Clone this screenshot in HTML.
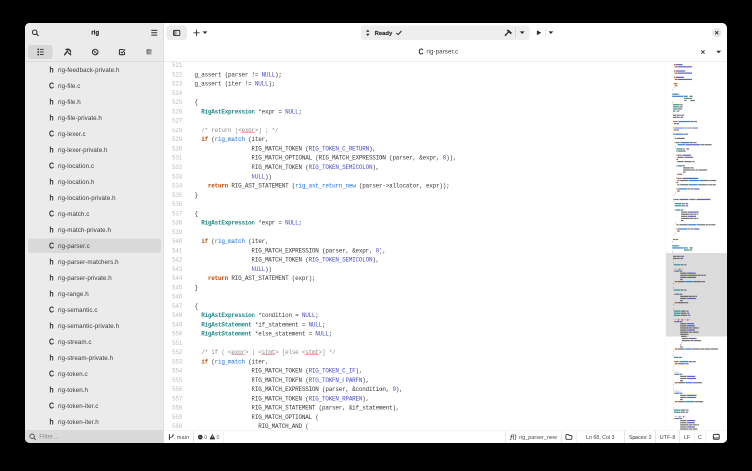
<!DOCTYPE html>
<html><head><meta charset="utf-8"><title>rig-parser.c</title>
<style>
html,body{margin:0;padding:0;background:#000;width:752px;height:471px;overflow:hidden}
body{font-family:"Liberation Sans",sans-serif;color:#2e2e2e;-webkit-font-smoothing:antialiased}
.win{position:absolute;left:25px;top:23px;width:702px;height:420px;overflow:hidden;border-radius:5px;background:#fff}
.scaler{position:absolute;left:-25px;top:-23px;width:1504px;height:942px;transform:scale(0.5);transform-origin:0 0;will-change:transform}

.abs{position:absolute;left:0;top:0;width:1504px;height:942px}
.abs *{position:absolute;box-sizing:border-box}
.abs span{position:static}
.sidebar{left:50px;top:46px;width:277.2px;height:840px;background:#ebebeb}
.sideborder{left:326.4px;top:46px;width:1.6px;height:840px;background:#dedede}
.sidesep{left:50px;top:122.4px;width:276.8px;height:1.8px;background:#dcdcdc}
.title{left:51.8px;width:277.2px;top:55.6px;text-align:center;font-weight:bold;font-size:12.4px;line-height:18px;color:#242424;-webkit-text-stroke:0.3px #242424}
.tabsel{left:56px;top:90px;width:49.4px;height:28px;border-radius:6px;background:#d7d7d7}
.frow{left:50px;width:277.2px;height:32px}
.frow.sel::before{content:"";position:absolute;left:6.2px;top:0.6px;width:265.6px;height:29.8px;border-radius:5px;background:#d9d9d9}
.fic{position:absolute!important;left:46.4px;top:6.6px;width:14px;text-align:center;font-weight:bold;font-size:16px;line-height:18px;color:#333;transform:scaleX(0.88)}
.fn{position:absolute!important;left:66px;top:6.9px;font-size:12.4px;letter-spacing:0.14px;line-height:18px;color:#3c3c3c;white-space:nowrap}
.filter{left:50px;top:860px;width:277.2px;height:26px;background:#dadada}
.filtertxt{left:78.4px;top:864.2px;font-size:12.4px;line-height:18px;color:#8c8c8c}
/* header */
.btnbg{background:#ebebeb;border-radius:6px}
.edsep{left:328px;top:122px;width:1126px;height:1.8px;background:#eeeeee}
.txt{white-space:nowrap;font-size:12.4px;line-height:18px;color:#333}
/* code */
.code{left:328px;top:124px;width:1004px;height:737.2px;overflow:hidden;font-family:"Liberation Mono",monospace;font-size:11.9px;letter-spacing:-0.426px;color:#3a3a3a}
.ln{position:static!important;height:18.531px;line-height:18.531px;white-space:pre;padding-left:47.6px;margin:0}
.no{position:absolute!important;left:0;width:36.2px;text-align:right;color:#bdbdbd}
.codein{left:0;top:-1.7px;width:1200px}
.k{color:#c64600;font-weight:bold}
.t{color:#218787;font-weight:bold}
.f{color:#1c71d8}
.c{color:#4a4fc4}
.m{color:#8f8f8f}
.e{color:#8f8f8f;text-decoration:underline solid rgba(224,27,36,0.85) 1.4px;text-underline-offset:1.4px}
/* minimap */
.mm{left:1332px;top:124px;width:122px;height:737.2px;background:#fff}
.mmline{left:1330.6px;top:124px;width:1.6px;height:737.2px;background:#f0f0f0}
.mmview{left:0;top:382.2px;width:122px;height:166.8px;background:#dcdcdc}
.mmsvg{left:0;top:0}
/* status */
.status{left:328px;top:860.6px;width:1126px;height:25.4px;background:#fff;border-top:1.8px solid #e9e9e9}
.vs{top:862.4px;width:1.6px;height:23.6px;background:#e6e6e6}
.st{top:865px;font-size:10.7px;color:#444}
svg{overflow:visible}

</style></head><body>
<div class="win"><div class="scaler"><div class="abs">

<!-- ===== Sidebar ===== -->
<div class="sidebar"></div>
<div class="title">rig</div>
<div class="tabsel"></div>
<div class="sidesep"></div>
<!--ICONS_SIDE-->
<div class="frow" style="top:124px"><span class="fic">h</span><span class="fn">rig-feedback-private.h</span></div>
<div class="frow" style="top:156px"><span class="fic">C</span><span class="fn">rig-file.c</span></div>
<div class="frow" style="top:188px"><span class="fic">h</span><span class="fn">rig-file.h</span></div>
<div class="frow" style="top:220px"><span class="fic">h</span><span class="fn">rig-file-private.h</span></div>
<div class="frow" style="top:252px"><span class="fic">C</span><span class="fn">rig-lexer.c</span></div>
<div class="frow" style="top:284px"><span class="fic">h</span><span class="fn">rig-lexer-private.h</span></div>
<div class="frow" style="top:316px"><span class="fic">C</span><span class="fn">rig-location.c</span></div>
<div class="frow" style="top:348px"><span class="fic">h</span><span class="fn">rig-location.h</span></div>
<div class="frow" style="top:380px"><span class="fic">h</span><span class="fn">rig-location-private.h</span></div>
<div class="frow" style="top:412px"><span class="fic">C</span><span class="fn">rig-match.c</span></div>
<div class="frow" style="top:444px"><span class="fic">h</span><span class="fn">rig-match-private.h</span></div>
<div class="frow sel" style="top:476px"><span class="fic">C</span><span class="fn">rig-parser.c</span></div>
<div class="frow" style="top:508px"><span class="fic">h</span><span class="fn">rig-parser-matchers.h</span></div>
<div class="frow" style="top:540px"><span class="fic">h</span><span class="fn">rig-parser-private.h</span></div>
<div class="frow" style="top:572px"><span class="fic">h</span><span class="fn">rig-range.h</span></div>
<div class="frow" style="top:604px"><span class="fic">C</span><span class="fn">rig-semantic.c</span></div>
<div class="frow" style="top:636px"><span class="fic">h</span><span class="fn">rig-semantic-private.h</span></div>
<div class="frow" style="top:668px"><span class="fic">C</span><span class="fn">rig-stream.c</span></div>
<div class="frow" style="top:700px"><span class="fic">h</span><span class="fn">rig-stream-private.h</span></div>
<div class="frow" style="top:732px"><span class="fic">C</span><span class="fn">rig-token.c</span></div>
<div class="frow" style="top:764px"><span class="fic">h</span><span class="fn">rig-token.h</span></div>
<div class="frow" style="top:796px"><span class="fic">C</span><span class="fn">rig-token-iter.c</span></div>
<div class="frow" style="top:828px"><span class="fic">h</span><span class="fn">rig-token-iter.h</span></div>
<div class="filter"></div>
<div class="filtertxt">Filter…</div>
<div class="sideborder"></div>

<!-- ===== Header ===== -->
<div class="btnbg" style="left:333.2px;top:51.2px;width:40.4px;height:28.4px"></div>
<div class="btnbg" style="left:721.8px;top:51.2px;width:336.8px;height:28.4px;background:#eeeeee"></div>
<div class="txt" style="left:749.2px;top:57.1px;font-weight:bold;font-size:11.8px;-webkit-text-stroke:0.36px #333">Ready</div>
<div style="left:1423.9px;top:55.9px;width:19.4px;height:19.4px;border-radius:50%;background:#e7e7e7"></div>
<div class="txt" style="left:835.8px;top:94.8px;font-weight:bold;font-size:16px;width:12px;text-align:center;transform:scaleX(0.88)">C</div>
<div class="txt" style="left:852.8px;top:94.4px;font-size:12.4px;letter-spacing:0.14px;color:#3c3c3c">rig-parser.c</div>
<!--ICONS_HEAD-->
<div class="edsep"></div>

<!-- ===== Code ===== -->
<div class="code"><div class="codein">
<div class="ln"><span class="no">521</span></div>
<div class="ln"><span class="no">522</span>  g_assert (parser != <span class="c">NULL</span>);</div>
<div class="ln"><span class="no">523</span>  g_assert (iter != <span class="c">NULL</span>);</div>
<div class="ln"><span class="no">524</span></div>
<div class="ln"><span class="no">525</span>  {</div>
<div class="ln"><span class="no">526</span>    <span class="t">RigAstExpression</span> *expr = <span class="c">NULL</span>;</div>
<div class="ln"><span class="no">527</span></div>
<div class="ln"><span class="no">528</span>    <span class="m">/* return [&lt;</span><span class="e">expr</span><span class="m">&gt;] ; */</span></div>
<div class="ln"><span class="no">529</span>    <span class="k">if</span> (<span class="f">rig_match</span> (iter,</div>
<div class="ln"><span class="no">530</span>                   RIG_MATCH_TOKEN (<span class="c">RIG_TOKEN_C_RETURN</span>),</div>
<div class="ln"><span class="no">531</span>                   RIG_MATCH_OPTIONAL (RIG_MATCH_EXPRESSION (parser, &amp;expr, <span class="c">0</span>)),</div>
<div class="ln"><span class="no">532</span>                   RIG_MATCH_TOKEN (<span class="c">RIG_TOKEN_SEMICOLON</span>),</div>
<div class="ln"><span class="no">533</span>                   <span class="c">NULL</span>))</div>
<div class="ln"><span class="no">534</span>      <span class="k">return</span> RIG_AST_STATEMENT (<span class="f">rig_ast_return_new</span> (parser-&gt;allocator, expr));</div>
<div class="ln"><span class="no">535</span>  }</div>
<div class="ln"><span class="no">536</span></div>
<div class="ln"><span class="no">537</span>  {</div>
<div class="ln"><span class="no">538</span>    <span class="t">RigAstExpression</span> *expr = <span class="c">NULL</span>;</div>
<div class="ln"><span class="no">539</span></div>
<div class="ln"><span class="no">540</span>    <span class="k">if</span> (<span class="f">rig_match</span> (iter,</div>
<div class="ln"><span class="no">541</span>                   RIG_MATCH_EXPRESSION (parser, &amp;expr, <span class="c">0</span>),</div>
<div class="ln"><span class="no">542</span>                   RIG_MATCH_TOKEN (<span class="c">RIG_TOKEN_SEMICOLON</span>),</div>
<div class="ln"><span class="no">543</span>                   <span class="c">NULL</span>))</div>
<div class="ln"><span class="no">544</span>      <span class="k">return</span> RIG_AST_STATEMENT (expr);</div>
<div class="ln"><span class="no">545</span>  }</div>
<div class="ln"><span class="no">546</span></div>
<div class="ln"><span class="no">547</span>  {</div>
<div class="ln"><span class="no">548</span>    <span class="t">RigAstExpression</span> *condition = <span class="c">NULL</span>;</div>
<div class="ln"><span class="no">549</span>    <span class="t">RigAstStatement</span> *if_statement = <span class="c">NULL</span>;</div>
<div class="ln"><span class="no">550</span>    <span class="t">RigAstStatement</span> *else_statement = <span class="c">NULL</span>;</div>
<div class="ln"><span class="no">551</span></div>
<div class="ln"><span class="no">552</span>    <span class="m">/* if ( &lt;</span><span class="e">expr</span><span class="m">&gt; ) &lt;</span><span class="e">stmt</span><span class="m">&gt; [else &lt;</span><span class="e">stmt</span><span class="m">&gt;] */</span></div>
<div class="ln"><span class="no">553</span>    <span class="k">if</span> (<span class="f">rig_match</span> (iter,</div>
<div class="ln"><span class="no">554</span>                   RIG_MATCH_TOKEN (<span class="c">RIG_TOKEN_C_IF</span>),</div>
<div class="ln"><span class="no">555</span>                   RIG_MATCH_TOKEN (<span class="c">RIG_TOKEN_LPAREN</span>),</div>
<div class="ln"><span class="no">556</span>                   RIG_MATCH_EXPRESSION (parser, &amp;condition, <span class="c">0</span>),</div>
<div class="ln"><span class="no">557</span>                   RIG_MATCH_TOKEN (<span class="c">RIG_TOKEN_RPAREN</span>),</div>
<div class="ln"><span class="no">558</span>                   RIG_MATCH_STATEMENT (parser, &amp;if_statement),</div>
<div class="ln"><span class="no">559</span>                   RIG_MATCH_OPTIONAL (</div>
<div class="ln"><span class="no">560</span>                     RIG_MATCH_AND (</div>
<div class="ln"><span class="no">561</span>                       RIG_MATCH_TOKEN (<span class="c">RIG_TOKEN_C_ELSE</span>),</div>
</div></div>

<!-- ===== Minimap ===== -->
<div class="mmline"></div>
<div class="mm"><div class="mmview"></div><svg class="mmsvg" width="122" height="736" viewBox="0 0 61 368"><rect x="7.88" y="2.10" width="1.68" height="1.2" fill="#c64600" opacity="0.9"/><rect x="9.98" y="2.10" width="6.30" height="1.2" fill="#4a4fc4" opacity="0.9"/><rect x="16.28" y="2.10" width="0.42" height="1.2" fill="#3a3a3a" opacity="0.72"/><rect x="8.72" y="4.21" width="2.52" height="1.2" fill="#c64600" opacity="0.9"/><rect x="11.66" y="4.21" width="13.86" height="1.2" fill="#4a4fc4" opacity="0.9"/><rect x="25.52" y="4.21" width="0.42" height="1.2" fill="#3a3a3a" opacity="0.72"/><rect x="7.88" y="8.42" width="1.68" height="1.2" fill="#c64600" opacity="0.9"/><rect x="9.98" y="8.42" width="8.82" height="1.2" fill="#4a4fc4" opacity="0.9"/><rect x="18.80" y="8.42" width="0.42" height="1.2" fill="#3a3a3a" opacity="0.72"/><rect x="8.72" y="10.52" width="2.52" height="1.2" fill="#c64600" opacity="0.9"/><rect x="11.66" y="10.52" width="13.86" height="1.2" fill="#4a4fc4" opacity="0.9"/><rect x="25.52" y="10.52" width="0.42" height="1.2" fill="#3a3a3a" opacity="0.72"/><rect x="7.88" y="14.74" width="1.68" height="1.2" fill="#c64600" opacity="0.9"/><rect x="9.98" y="14.74" width="7.56" height="1.2" fill="#4a4fc4" opacity="0.9"/><rect x="17.54" y="14.74" width="0.42" height="1.2" fill="#3a3a3a" opacity="0.72"/><rect x="8.72" y="16.84" width="2.52" height="1.2" fill="#c64600" opacity="0.9"/><rect x="11.66" y="16.84" width="13.86" height="1.2" fill="#4a4fc4" opacity="0.9"/><rect x="25.52" y="16.84" width="0.42" height="1.2" fill="#3a3a3a" opacity="0.72"/><rect x="7.88" y="21.05" width="2.94" height="1.2" fill="#c64600" opacity="0.9"/><rect x="10.82" y="21.05" width="0.42" height="1.2" fill="#3a3a3a" opacity="0.72"/><rect x="8.72" y="23.16" width="2.10" height="1.2" fill="#c64600" opacity="0.9"/><rect x="10.82" y="23.16" width="0.42" height="1.2" fill="#3a3a3a" opacity="0.72"/><rect x="7.88" y="25.27" width="0.42" height="1.2" fill="#3a3a3a" opacity="0.72"/><rect x="6.20" y="27.37" width="0.42" height="1.2" fill="#3a3a3a" opacity="0.72"/><rect x="6.20" y="31.58" width="6.30" height="1.2" fill="#218787" opacity="0.9"/><rect x="12.92" y="31.58" width="0.42" height="1.2" fill="#3a3a3a" opacity="0.72"/><rect x="6.20" y="33.69" width="10.92" height="1.2" fill="#1c71d8" opacity="0.9"/><rect x="17.54" y="33.69" width="0.42" height="1.2" fill="#3a3a3a" opacity="0.72"/><rect x="17.96" y="33.69" width="3.78" height="1.2" fill="#218787" opacity="0.9"/><rect x="23.42" y="33.69" width="0.42" height="1.2" fill="#3a3a3a" opacity="0.72"/><rect x="23.84" y="33.69" width="2.52" height="1.2" fill="#3a3a3a" opacity="0.72"/><rect x="26.36" y="33.69" width="0.42" height="1.2" fill="#3a3a3a" opacity="0.72"/><rect x="17.96" y="35.80" width="5.04" height="1.2" fill="#218787" opacity="0.9"/><rect x="23.42" y="35.80" width="0.42" height="1.2" fill="#3a3a3a" opacity="0.72"/><rect x="23.84" y="35.80" width="1.68" height="1.2" fill="#3a3a3a" opacity="0.72"/><rect x="25.52" y="35.80" width="0.42" height="1.2" fill="#3a3a3a" opacity="0.72"/><rect x="18.38" y="37.90" width="2.10" height="1.2" fill="#3a3a3a" opacity="0.72"/><rect x="24.26" y="37.90" width="4.20" height="1.2" fill="#3a3a3a" opacity="0.72"/><rect x="28.46" y="37.90" width="0.42" height="1.2" fill="#3a3a3a" opacity="0.72"/><rect x="6.20" y="40.01" width="0.42" height="1.2" fill="#3a3a3a" opacity="0.72"/><rect x="7.04" y="42.11" width="6.72" height="1.2" fill="#218787" opacity="0.9"/><rect x="14.18" y="42.11" width="0.42" height="1.2" fill="#3a3a3a" opacity="0.72"/><rect x="14.60" y="42.11" width="1.68" height="1.2" fill="#3a3a3a" opacity="0.72"/><rect x="16.28" y="42.11" width="0.42" height="1.2" fill="#3a3a3a" opacity="0.72"/><rect x="7.04" y="44.22" width="6.30" height="1.2" fill="#218787" opacity="0.9"/><rect x="13.76" y="44.22" width="0.42" height="1.2" fill="#3a3a3a" opacity="0.72"/><rect x="14.18" y="44.22" width="2.10" height="1.2" fill="#3a3a3a" opacity="0.72"/><rect x="16.28" y="44.22" width="0.42" height="1.2" fill="#3a3a3a" opacity="0.72"/><rect x="7.04" y="46.33" width="4.20" height="1.2" fill="#218787" opacity="0.9"/><rect x="11.66" y="46.33" width="0.42" height="1.2" fill="#3a3a3a" opacity="0.72"/><rect x="12.08" y="46.33" width="3.36" height="1.2" fill="#3a3a3a" opacity="0.72"/><rect x="15.44" y="46.33" width="0.42" height="1.2" fill="#3a3a3a" opacity="0.72"/><rect x="7.04" y="48.43" width="2.52" height="1.2" fill="#218787" opacity="0.9"/><rect x="10.82" y="48.43" width="0.42" height="1.2" fill="#3a3a3a" opacity="0.72"/><rect x="11.24" y="48.43" width="1.68" height="1.2" fill="#3a3a3a" opacity="0.72"/><rect x="12.92" y="48.43" width="0.42" height="1.2" fill="#3a3a3a" opacity="0.72"/><rect x="7.04" y="52.64" width="3.36" height="1.2" fill="#3a3a3a" opacity="0.72"/><rect x="10.82" y="52.64" width="0.42" height="1.2" fill="#3a3a3a" opacity="0.72"/><rect x="11.24" y="52.64" width="2.52" height="1.2" fill="#3a3a3a" opacity="0.72"/><rect x="14.18" y="52.64" width="0.84" height="1.2" fill="#3a3a3a" opacity="0.72"/><rect x="15.44" y="52.64" width="1.68" height="1.2" fill="#4a4fc4" opacity="0.9"/><rect x="17.12" y="52.64" width="0.84" height="1.2" fill="#3a3a3a" opacity="0.72"/><rect x="7.04" y="54.75" width="3.36" height="1.2" fill="#3a3a3a" opacity="0.72"/><rect x="10.82" y="54.75" width="0.42" height="1.2" fill="#3a3a3a" opacity="0.72"/><rect x="11.24" y="54.75" width="1.68" height="1.2" fill="#3a3a3a" opacity="0.72"/><rect x="13.34" y="54.75" width="0.84" height="1.2" fill="#3a3a3a" opacity="0.72"/><rect x="14.60" y="54.75" width="1.68" height="1.2" fill="#4a4fc4" opacity="0.9"/><rect x="16.28" y="54.75" width="0.84" height="1.2" fill="#3a3a3a" opacity="0.72"/><rect x="7.04" y="58.96" width="0.84" height="1.2" fill="#c64600" opacity="0.9"/><rect x="8.30" y="58.96" width="1.26" height="1.2" fill="#3a3a3a" opacity="0.72"/><rect x="9.56" y="58.96" width="1.68" height="1.2" fill="#3a3a3a" opacity="0.72"/><rect x="11.66" y="58.96" width="0.42" height="1.2" fill="#3a3a3a" opacity="0.72"/><rect x="12.50" y="58.96" width="11.34" height="1.2" fill="#1c71d8" opacity="0.9"/><rect x="24.26" y="58.96" width="0.42" height="1.2" fill="#3a3a3a" opacity="0.72"/><rect x="24.68" y="58.96" width="2.52" height="1.2" fill="#3a3a3a" opacity="0.72"/><rect x="27.20" y="58.96" width="0.42" height="1.2" fill="#3a3a3a" opacity="0.72"/><rect x="28.04" y="58.96" width="1.68" height="1.2" fill="#3a3a3a" opacity="0.72"/><rect x="29.72" y="58.96" width="1.26" height="1.2" fill="#3a3a3a" opacity="0.72"/><rect x="7.88" y="61.07" width="2.52" height="1.2" fill="#c64600" opacity="0.9"/><rect x="10.82" y="61.07" width="1.68" height="1.2" fill="#4a4fc4" opacity="0.9"/><rect x="12.50" y="61.07" width="0.42" height="1.2" fill="#3a3a3a" opacity="0.72"/><rect x="7.04" y="65.28" width="0.84" height="1.2" fill="#c64600" opacity="0.9"/><rect x="8.30" y="65.28" width="0.84" height="1.2" fill="#3a3a3a" opacity="0.72"/><rect x="9.14" y="65.28" width="8.82" height="1.2" fill="#1c71d8" opacity="0.9"/><rect x="18.38" y="65.28" width="0.42" height="1.2" fill="#3a3a3a" opacity="0.72"/><rect x="18.80" y="65.28" width="1.68" height="1.2" fill="#3a3a3a" opacity="0.72"/><rect x="20.48" y="65.28" width="0.42" height="1.2" fill="#3a3a3a" opacity="0.72"/><rect x="21.32" y="65.28" width="0.42" height="1.2" fill="#3a3a3a" opacity="0.72"/><rect x="21.74" y="65.28" width="2.10" height="1.2" fill="#3a3a3a" opacity="0.72"/><rect x="24.26" y="65.28" width="1.68" height="1.2" fill="#4a4fc4" opacity="0.9"/><rect x="25.94" y="65.28" width="0.42" height="1.2" fill="#3a3a3a" opacity="0.72"/><rect x="26.78" y="65.28" width="4.20" height="1.2" fill="#4a4fc4" opacity="0.9"/><rect x="30.98" y="65.28" width="0.84" height="1.2" fill="#3a3a3a" opacity="0.72"/><rect x="7.88" y="67.39" width="2.52" height="1.2" fill="#c64600" opacity="0.9"/><rect x="10.82" y="67.39" width="1.68" height="1.2" fill="#3a3a3a" opacity="0.72"/><rect x="12.50" y="67.39" width="0.42" height="1.2" fill="#3a3a3a" opacity="0.72"/><rect x="7.04" y="71.60" width="0.84" height="1.2" fill="#c64600" opacity="0.9"/><rect x="8.30" y="71.60" width="0.42" height="1.2" fill="#3a3a3a" opacity="0.72"/><rect x="8.72" y="71.60" width="8.40" height="1.2" fill="#1c71d8" opacity="0.9"/><rect x="17.54" y="71.60" width="0.42" height="1.2" fill="#3a3a3a" opacity="0.72"/><rect x="17.96" y="71.60" width="1.26" height="1.2" fill="#3a3a3a" opacity="0.72"/><rect x="19.22" y="71.60" width="0.42" height="1.2" fill="#3a3a3a" opacity="0.72"/><rect x="19.64" y="71.60" width="1.68" height="1.2" fill="#3a3a3a" opacity="0.72"/><rect x="21.32" y="71.60" width="0.84" height="1.2" fill="#3a3a3a" opacity="0.72"/><rect x="7.88" y="73.70" width="0.42" height="1.2" fill="#3a3a3a" opacity="0.72"/><rect x="8.72" y="75.81" width="1.26" height="1.2" fill="#218787" opacity="0.9"/><rect x="10.40" y="75.81" width="7.98" height="1.2" fill="#3a3a3a" opacity="0.72"/><rect x="18.38" y="75.81" width="0.42" height="1.2" fill="#3a3a3a" opacity="0.72"/><rect x="8.72" y="80.02" width="0.84" height="1.2" fill="#c64600" opacity="0.9"/><rect x="9.98" y="80.02" width="1.26" height="1.2" fill="#3a3a3a" opacity="0.72"/><rect x="11.24" y="80.02" width="2.10" height="1.2" fill="#3a3a3a" opacity="0.72"/><rect x="13.76" y="80.02" width="0.42" height="1.2" fill="#3a3a3a" opacity="0.72"/><rect x="14.60" y="80.02" width="8.82" height="1.2" fill="#1c71d8" opacity="0.9"/><rect x="23.84" y="80.02" width="0.42" height="1.2" fill="#3a3a3a" opacity="0.72"/><rect x="24.26" y="80.02" width="2.52" height="1.2" fill="#3a3a3a" opacity="0.72"/><rect x="26.78" y="80.02" width="0.42" height="1.2" fill="#3a3a3a" opacity="0.72"/><rect x="27.62" y="80.02" width="1.68" height="1.2" fill="#3a3a3a" opacity="0.72"/><rect x="29.30" y="80.02" width="1.26" height="1.2" fill="#3a3a3a" opacity="0.72"/><rect x="11.66" y="82.13" width="7.56" height="1.2" fill="#1c71d8" opacity="0.9"/><rect x="19.64" y="82.13" width="0.42" height="1.2" fill="#3a3a3a" opacity="0.72"/><rect x="20.06" y="82.13" width="13.86" height="1.2" fill="#4a4fc4" opacity="0.9"/><rect x="33.92" y="82.13" width="0.42" height="1.2" fill="#3a3a3a" opacity="0.72"/><rect x="34.76" y="82.13" width="3.36" height="1.2" fill="#3a3a3a" opacity="0.72"/><rect x="38.12" y="82.13" width="0.42" height="1.2" fill="#3a3a3a" opacity="0.72"/><rect x="38.96" y="82.13" width="6.30" height="1.2" fill="#3a3a3a" opacity="0.72"/><rect x="45.26" y="82.13" width="0.42" height="1.2" fill="#3a3a3a" opacity="0.72"/><rect x="9.56" y="84.23" width="0.42" height="1.2" fill="#3a3a3a" opacity="0.72"/><rect x="10.40" y="86.34" width="6.30" height="1.2" fill="#218787" opacity="0.9"/><rect x="17.12" y="86.34" width="0.42" height="1.2" fill="#3a3a3a" opacity="0.72"/><rect x="17.54" y="86.34" width="1.26" height="1.2" fill="#3a3a3a" opacity="0.72"/><rect x="20.06" y="86.34" width="0.42" height="1.2" fill="#3a3a3a" opacity="0.72"/><rect x="20.90" y="86.34" width="1.68" height="1.2" fill="#4a4fc4" opacity="0.9"/><rect x="22.58" y="86.34" width="0.42" height="1.2" fill="#3a3a3a" opacity="0.72"/><rect x="10.40" y="88.45" width="1.26" height="1.2" fill="#218787" opacity="0.9"/><rect x="12.08" y="88.45" width="7.14" height="1.2" fill="#3a3a3a" opacity="0.72"/><rect x="19.22" y="88.45" width="0.42" height="1.2" fill="#3a3a3a" opacity="0.72"/><rect x="10.40" y="92.66" width="0.84" height="1.2" fill="#c64600" opacity="0.9"/><rect x="11.66" y="92.66" width="0.42" height="1.2" fill="#3a3a3a" opacity="0.72"/><rect x="12.08" y="92.66" width="1.26" height="1.2" fill="#3a3a3a" opacity="0.72"/><rect x="13.34" y="92.66" width="0.42" height="1.2" fill="#3a3a3a" opacity="0.72"/><rect x="13.76" y="92.66" width="1.68" height="1.2" fill="#3a3a3a" opacity="0.72"/><rect x="15.86" y="92.66" width="0.84" height="1.2" fill="#3a3a3a" opacity="0.72"/><rect x="17.12" y="92.66" width="7.56" height="1.2" fill="#4a4fc4" opacity="0.9"/><rect x="24.68" y="92.66" width="0.42" height="1.2" fill="#3a3a3a" opacity="0.72"/><rect x="11.24" y="94.76" width="6.30" height="1.2" fill="#3a3a3a" opacity="0.72"/><rect x="17.96" y="94.76" width="0.42" height="1.2" fill="#3a3a3a" opacity="0.72"/><rect x="18.80" y="94.76" width="7.98" height="1.2" fill="#3a3a3a" opacity="0.72"/><rect x="26.78" y="94.76" width="0.42" height="1.2" fill="#3a3a3a" opacity="0.72"/><rect x="10.40" y="96.87" width="1.68" height="1.2" fill="#c64600" opacity="0.9"/><rect x="11.24" y="98.98" width="6.30" height="1.2" fill="#3a3a3a" opacity="0.72"/><rect x="17.96" y="98.98" width="0.42" height="1.2" fill="#3a3a3a" opacity="0.72"/><rect x="18.80" y="98.98" width="6.30" height="1.2" fill="#3a3a3a" opacity="0.72"/><rect x="25.52" y="98.98" width="0.42" height="1.2" fill="#3a3a3a" opacity="0.72"/><rect x="26.36" y="98.98" width="1.68" height="1.2" fill="#4a4fc4" opacity="0.9"/><rect x="28.04" y="98.98" width="0.42" height="1.2" fill="#3a3a3a" opacity="0.72"/><rect x="10.40" y="103.19" width="0.84" height="1.2" fill="#c64600" opacity="0.9"/><rect x="11.66" y="103.19" width="0.42" height="1.2" fill="#3a3a3a" opacity="0.72"/><rect x="12.08" y="103.19" width="3.78" height="1.2" fill="#1c71d8" opacity="0.9"/><rect x="16.28" y="103.19" width="0.42" height="1.2" fill="#3a3a3a" opacity="0.72"/><rect x="16.70" y="103.19" width="1.68" height="1.2" fill="#3a3a3a" opacity="0.72"/><rect x="18.38" y="103.19" width="0.42" height="1.2" fill="#3a3a3a" opacity="0.72"/><rect x="17.12" y="105.29" width="6.72" height="1.2" fill="#3a3a3a" opacity="0.72"/><rect x="24.26" y="105.29" width="0.42" height="1.2" fill="#3a3a3a" opacity="0.72"/><rect x="24.68" y="105.29" width="2.10" height="1.2" fill="#3a3a3a" opacity="0.72"/><rect x="26.78" y="105.29" width="0.84" height="1.2" fill="#3a3a3a" opacity="0.72"/><rect x="17.12" y="107.40" width="7.98" height="1.2" fill="#3a3a3a" opacity="0.72"/><rect x="25.52" y="107.40" width="0.42" height="1.2" fill="#3a3a3a" opacity="0.72"/><rect x="25.94" y="107.40" width="2.52" height="1.2" fill="#3a3a3a" opacity="0.72"/><rect x="28.46" y="107.40" width="0.42" height="1.2" fill="#3a3a3a" opacity="0.72"/><rect x="29.30" y="107.40" width="0.42" height="1.2" fill="#3a3a3a" opacity="0.72"/><rect x="29.72" y="107.40" width="2.10" height="1.2" fill="#3a3a3a" opacity="0.72"/><rect x="31.82" y="107.40" width="0.42" height="1.2" fill="#3a3a3a" opacity="0.72"/><rect x="32.66" y="107.40" width="7.56" height="1.2" fill="#3a3a3a" opacity="0.72"/><rect x="40.22" y="107.40" width="0.84" height="1.2" fill="#3a3a3a" opacity="0.72"/><rect x="17.12" y="109.51" width="1.68" height="1.2" fill="#4a4fc4" opacity="0.9"/><rect x="18.80" y="109.51" width="0.84" height="1.2" fill="#3a3a3a" opacity="0.72"/><rect x="11.24" y="111.61" width="2.52" height="1.2" fill="#c64600" opacity="0.9"/><rect x="14.18" y="111.61" width="1.68" height="1.2" fill="#4a4fc4" opacity="0.9"/><rect x="15.86" y="111.61" width="0.42" height="1.2" fill="#3a3a3a" opacity="0.72"/><rect x="10.40" y="115.82" width="0.84" height="1.2" fill="#c64600" opacity="0.9"/><rect x="11.66" y="115.82" width="0.42" height="1.2" fill="#3a3a3a" opacity="0.72"/><rect x="12.08" y="115.82" width="1.26" height="1.2" fill="#3a3a3a" opacity="0.72"/><rect x="13.34" y="115.82" width="0.42" height="1.2" fill="#3a3a3a" opacity="0.72"/><rect x="13.76" y="115.82" width="1.68" height="1.2" fill="#3a3a3a" opacity="0.72"/><rect x="15.86" y="115.82" width="0.84" height="1.2" fill="#3a3a3a" opacity="0.72"/><rect x="17.12" y="115.82" width="14.70" height="1.2" fill="#4a4fc4" opacity="0.9"/><rect x="31.82" y="115.82" width="0.42" height="1.2" fill="#3a3a3a" opacity="0.72"/><rect x="11.24" y="117.93" width="1.68" height="1.2" fill="#3a3a3a" opacity="0.72"/><rect x="13.34" y="117.93" width="0.42" height="1.2" fill="#3a3a3a" opacity="0.72"/><rect x="14.18" y="117.93" width="7.98" height="1.2" fill="#3a3a3a" opacity="0.72"/><rect x="22.58" y="117.93" width="0.42" height="1.2" fill="#3a3a3a" opacity="0.72"/><rect x="23.00" y="117.93" width="10.08" height="1.2" fill="#1c71d8" opacity="0.9"/><rect x="33.50" y="117.93" width="0.42" height="1.2" fill="#3a3a3a" opacity="0.72"/><rect x="33.92" y="117.93" width="2.52" height="1.2" fill="#3a3a3a" opacity="0.72"/><rect x="36.44" y="117.93" width="0.84" height="1.2" fill="#3a3a3a" opacity="0.72"/><rect x="37.28" y="117.93" width="4.20" height="1.2" fill="#3a3a3a" opacity="0.72"/><rect x="41.48" y="117.93" width="0.42" height="1.2" fill="#3a3a3a" opacity="0.72"/><rect x="42.32" y="117.93" width="1.68" height="1.2" fill="#3a3a3a" opacity="0.72"/><rect x="44.00" y="117.93" width="0.42" height="1.2" fill="#3a3a3a" opacity="0.72"/><rect x="44.84" y="117.93" width="4.20" height="1.2" fill="#3a3a3a" opacity="0.72"/><rect x="49.04" y="117.93" width="1.26" height="1.2" fill="#3a3a3a" opacity="0.72"/><rect x="10.40" y="120.04" width="1.68" height="1.2" fill="#c64600" opacity="0.9"/><rect x="11.24" y="122.14" width="1.68" height="1.2" fill="#3a3a3a" opacity="0.72"/><rect x="13.34" y="122.14" width="0.42" height="1.2" fill="#3a3a3a" opacity="0.72"/><rect x="14.18" y="122.14" width="7.98" height="1.2" fill="#3a3a3a" opacity="0.72"/><rect x="22.58" y="122.14" width="0.42" height="1.2" fill="#3a3a3a" opacity="0.72"/><rect x="23.00" y="122.14" width="8.40" height="1.2" fill="#1c71d8" opacity="0.9"/><rect x="31.82" y="122.14" width="0.42" height="1.2" fill="#3a3a3a" opacity="0.72"/><rect x="32.24" y="122.14" width="2.52" height="1.2" fill="#3a3a3a" opacity="0.72"/><rect x="34.76" y="122.14" width="0.84" height="1.2" fill="#3a3a3a" opacity="0.72"/><rect x="35.60" y="122.14" width="4.20" height="1.2" fill="#3a3a3a" opacity="0.72"/><rect x="39.80" y="122.14" width="0.42" height="1.2" fill="#3a3a3a" opacity="0.72"/><rect x="40.64" y="122.14" width="1.68" height="1.2" fill="#3a3a3a" opacity="0.72"/><rect x="42.32" y="122.14" width="0.42" height="1.2" fill="#3a3a3a" opacity="0.72"/><rect x="43.16" y="122.14" width="2.52" height="1.2" fill="#3a3a3a" opacity="0.72"/><rect x="45.68" y="122.14" width="0.42" height="1.2" fill="#3a3a3a" opacity="0.72"/><rect x="46.52" y="122.14" width="2.10" height="1.2" fill="#3a3a3a" opacity="0.72"/><rect x="48.62" y="122.14" width="1.26" height="1.2" fill="#3a3a3a" opacity="0.72"/><rect x="10.40" y="126.35" width="0.84" height="1.2" fill="#c64600" opacity="0.9"/><rect x="11.66" y="126.35" width="0.42" height="1.2" fill="#3a3a3a" opacity="0.72"/><rect x="12.08" y="126.35" width="9.24" height="1.2" fill="#1c71d8" opacity="0.9"/><rect x="21.74" y="126.35" width="0.42" height="1.2" fill="#3a3a3a" opacity="0.72"/><rect x="22.16" y="126.35" width="1.68" height="1.2" fill="#3a3a3a" opacity="0.72"/><rect x="23.84" y="126.35" width="0.42" height="1.2" fill="#3a3a3a" opacity="0.72"/><rect x="24.68" y="126.35" width="0.42" height="1.2" fill="#3a3a3a" opacity="0.72"/><rect x="25.10" y="126.35" width="2.10" height="1.2" fill="#3a3a3a" opacity="0.72"/><rect x="27.20" y="126.35" width="0.42" height="1.2" fill="#3a3a3a" opacity="0.72"/><rect x="28.04" y="126.35" width="4.62" height="1.2" fill="#4a4fc4" opacity="0.9"/><rect x="32.66" y="126.35" width="0.84" height="1.2" fill="#3a3a3a" opacity="0.72"/><rect x="11.24" y="128.46" width="2.10" height="1.2" fill="#c64600" opacity="0.9"/><rect x="13.34" y="128.46" width="0.42" height="1.2" fill="#3a3a3a" opacity="0.72"/><rect x="9.56" y="130.57" width="0.42" height="1.2" fill="#3a3a3a" opacity="0.72"/><rect x="7.88" y="132.67" width="0.42" height="1.2" fill="#3a3a3a" opacity="0.72"/><rect x="7.04" y="136.88" width="0.84" height="1.2" fill="#c64600" opacity="0.9"/><rect x="8.30" y="136.88" width="0.42" height="1.2" fill="#3a3a3a" opacity="0.72"/><rect x="8.72" y="136.88" width="1.26" height="1.2" fill="#3a3a3a" opacity="0.72"/><rect x="9.98" y="136.88" width="0.42" height="1.2" fill="#3a3a3a" opacity="0.72"/><rect x="10.40" y="136.88" width="1.68" height="1.2" fill="#3a3a3a" opacity="0.72"/><rect x="12.50" y="136.88" width="0.84" height="1.2" fill="#3a3a3a" opacity="0.72"/><rect x="13.76" y="136.88" width="8.40" height="1.2" fill="#4a4fc4" opacity="0.9"/><rect x="22.58" y="136.88" width="0.84" height="1.2" fill="#3a3a3a" opacity="0.72"/><rect x="23.84" y="136.88" width="2.52" height="1.2" fill="#3a3a3a" opacity="0.72"/><rect x="26.36" y="136.88" width="0.84" height="1.2" fill="#3a3a3a" opacity="0.72"/><rect x="27.20" y="136.88" width="2.10" height="1.2" fill="#3a3a3a" opacity="0.72"/><rect x="29.72" y="136.88" width="0.42" height="1.2" fill="#3a3a3a" opacity="0.72"/><rect x="30.56" y="136.88" width="13.44" height="1.2" fill="#4a4fc4" opacity="0.9"/><rect x="44.00" y="136.88" width="0.42" height="1.2" fill="#3a3a3a" opacity="0.72"/><rect x="7.88" y="138.99" width="0.42" height="1.2" fill="#3a3a3a" opacity="0.72"/><rect x="8.72" y="141.10" width="6.72" height="1.2" fill="#218787" opacity="0.9"/><rect x="15.86" y="141.10" width="0.42" height="1.2" fill="#3a3a3a" opacity="0.72"/><rect x="16.28" y="141.10" width="2.52" height="1.2" fill="#3a3a3a" opacity="0.72"/><rect x="19.22" y="141.10" width="0.42" height="1.2" fill="#3a3a3a" opacity="0.72"/><rect x="20.06" y="141.10" width="1.68" height="1.2" fill="#4a4fc4" opacity="0.9"/><rect x="21.74" y="141.10" width="0.42" height="1.2" fill="#3a3a3a" opacity="0.72"/><rect x="8.72" y="143.20" width="6.72" height="1.2" fill="#218787" opacity="0.9"/><rect x="15.86" y="143.20" width="0.42" height="1.2" fill="#3a3a3a" opacity="0.72"/><rect x="16.28" y="143.20" width="2.52" height="1.2" fill="#3a3a3a" opacity="0.72"/><rect x="19.22" y="143.20" width="0.42" height="1.2" fill="#3a3a3a" opacity="0.72"/><rect x="20.06" y="143.20" width="1.68" height="1.2" fill="#4a4fc4" opacity="0.9"/><rect x="21.74" y="143.20" width="0.42" height="1.2" fill="#3a3a3a" opacity="0.72"/><rect x="8.72" y="147.41" width="0.84" height="1.2" fill="#c64600" opacity="0.9"/><rect x="9.98" y="147.41" width="0.42" height="1.2" fill="#3a3a3a" opacity="0.72"/><rect x="10.40" y="147.41" width="3.78" height="1.2" fill="#1c71d8" opacity="0.9"/><rect x="14.60" y="147.41" width="0.42" height="1.2" fill="#3a3a3a" opacity="0.72"/><rect x="15.02" y="147.41" width="1.68" height="1.2" fill="#3a3a3a" opacity="0.72"/><rect x="16.70" y="147.41" width="0.42" height="1.2" fill="#3a3a3a" opacity="0.72"/><rect x="15.02" y="149.52" width="6.30" height="1.2" fill="#3a3a3a" opacity="0.72"/><rect x="21.74" y="149.52" width="0.42" height="1.2" fill="#3a3a3a" opacity="0.72"/><rect x="22.16" y="149.52" width="9.66" height="1.2" fill="#4a4fc4" opacity="0.9"/><rect x="31.82" y="149.52" width="0.84" height="1.2" fill="#3a3a3a" opacity="0.72"/><rect x="15.02" y="151.63" width="8.40" height="1.2" fill="#3a3a3a" opacity="0.72"/><rect x="23.84" y="151.63" width="0.42" height="1.2" fill="#3a3a3a" opacity="0.72"/><rect x="24.26" y="151.63" width="2.52" height="1.2" fill="#3a3a3a" opacity="0.72"/><rect x="26.78" y="151.63" width="0.42" height="1.2" fill="#3a3a3a" opacity="0.72"/><rect x="27.62" y="151.63" width="0.42" height="1.2" fill="#3a3a3a" opacity="0.72"/><rect x="28.04" y="151.63" width="2.10" height="1.2" fill="#3a3a3a" opacity="0.72"/><rect x="30.14" y="151.63" width="0.42" height="1.2" fill="#3a3a3a" opacity="0.72"/><rect x="30.98" y="151.63" width="0.42" height="1.2" fill="#4a4fc4" opacity="0.9"/><rect x="31.40" y="151.63" width="0.84" height="1.2" fill="#3a3a3a" opacity="0.72"/><rect x="15.02" y="153.73" width="6.30" height="1.2" fill="#3a3a3a" opacity="0.72"/><rect x="21.74" y="153.73" width="0.42" height="1.2" fill="#3a3a3a" opacity="0.72"/><rect x="22.16" y="153.73" width="7.14" height="1.2" fill="#4a4fc4" opacity="0.9"/><rect x="29.30" y="153.73" width="0.84" height="1.2" fill="#3a3a3a" opacity="0.72"/><rect x="15.02" y="155.84" width="8.40" height="1.2" fill="#3a3a3a" opacity="0.72"/><rect x="23.84" y="155.84" width="0.42" height="1.2" fill="#3a3a3a" opacity="0.72"/><rect x="24.26" y="155.84" width="2.52" height="1.2" fill="#3a3a3a" opacity="0.72"/><rect x="26.78" y="155.84" width="0.42" height="1.2" fill="#3a3a3a" opacity="0.72"/><rect x="27.62" y="155.84" width="0.42" height="1.2" fill="#3a3a3a" opacity="0.72"/><rect x="28.04" y="155.84" width="2.10" height="1.2" fill="#3a3a3a" opacity="0.72"/><rect x="30.14" y="155.84" width="0.42" height="1.2" fill="#3a3a3a" opacity="0.72"/><rect x="30.98" y="155.84" width="0.42" height="1.2" fill="#4a4fc4" opacity="0.9"/><rect x="31.40" y="155.84" width="0.84" height="1.2" fill="#3a3a3a" opacity="0.72"/><rect x="15.02" y="157.94" width="1.68" height="1.2" fill="#4a4fc4" opacity="0.9"/><rect x="16.70" y="157.94" width="0.84" height="1.2" fill="#3a3a3a" opacity="0.72"/><rect x="9.56" y="160.05" width="0.42" height="1.2" fill="#3a3a3a" opacity="0.72"/><rect x="10.40" y="162.16" width="1.68" height="1.2" fill="#3a3a3a" opacity="0.72"/><rect x="12.50" y="162.16" width="0.42" height="1.2" fill="#3a3a3a" opacity="0.72"/><rect x="13.34" y="162.16" width="8.40" height="1.2" fill="#3a3a3a" opacity="0.72"/><rect x="22.16" y="162.16" width="0.42" height="1.2" fill="#3a3a3a" opacity="0.72"/><rect x="22.58" y="162.16" width="7.98" height="1.2" fill="#1c71d8" opacity="0.9"/><rect x="30.98" y="162.16" width="0.42" height="1.2" fill="#3a3a3a" opacity="0.72"/><rect x="31.40" y="162.16" width="2.52" height="1.2" fill="#3a3a3a" opacity="0.72"/><rect x="33.92" y="162.16" width="0.84" height="1.2" fill="#3a3a3a" opacity="0.72"/><rect x="34.76" y="162.16" width="4.20" height="1.2" fill="#3a3a3a" opacity="0.72"/><rect x="38.96" y="162.16" width="0.42" height="1.2" fill="#3a3a3a" opacity="0.72"/><rect x="39.80" y="162.16" width="1.68" height="1.2" fill="#3a3a3a" opacity="0.72"/><rect x="41.48" y="162.16" width="0.42" height="1.2" fill="#3a3a3a" opacity="0.72"/><rect x="42.32" y="162.16" width="2.10" height="1.2" fill="#3a3a3a" opacity="0.72"/><rect x="44.42" y="162.16" width="0.42" height="1.2" fill="#3a3a3a" opacity="0.72"/><rect x="45.26" y="162.16" width="2.94" height="1.2" fill="#3a3a3a" opacity="0.72"/><rect x="48.20" y="162.16" width="1.26" height="1.2" fill="#3a3a3a" opacity="0.72"/><rect x="10.40" y="166.37" width="0.84" height="1.2" fill="#c64600" opacity="0.9"/><rect x="11.66" y="166.37" width="0.42" height="1.2" fill="#3a3a3a" opacity="0.72"/><rect x="12.08" y="166.37" width="9.24" height="1.2" fill="#1c71d8" opacity="0.9"/><rect x="21.74" y="166.37" width="0.42" height="1.2" fill="#3a3a3a" opacity="0.72"/><rect x="22.16" y="166.37" width="1.68" height="1.2" fill="#3a3a3a" opacity="0.72"/><rect x="23.84" y="166.37" width="0.42" height="1.2" fill="#3a3a3a" opacity="0.72"/><rect x="24.68" y="166.37" width="0.42" height="1.2" fill="#3a3a3a" opacity="0.72"/><rect x="25.10" y="166.37" width="2.10" height="1.2" fill="#3a3a3a" opacity="0.72"/><rect x="27.20" y="166.37" width="0.42" height="1.2" fill="#3a3a3a" opacity="0.72"/><rect x="28.04" y="166.37" width="4.62" height="1.2" fill="#4a4fc4" opacity="0.9"/><rect x="32.66" y="166.37" width="0.84" height="1.2" fill="#3a3a3a" opacity="0.72"/><rect x="11.24" y="168.47" width="2.10" height="1.2" fill="#c64600" opacity="0.9"/><rect x="13.34" y="168.47" width="0.42" height="1.2" fill="#3a3a3a" opacity="0.72"/><rect x="9.56" y="170.58" width="0.42" height="1.2" fill="#3a3a3a" opacity="0.72"/><rect x="7.88" y="172.69" width="0.42" height="1.2" fill="#3a3a3a" opacity="0.72"/><rect x="7.04" y="176.90" width="2.52" height="1.2" fill="#c64600" opacity="0.9"/><rect x="9.98" y="176.90" width="1.68" height="1.2" fill="#3a3a3a" opacity="0.72"/><rect x="11.66" y="176.90" width="0.42" height="1.2" fill="#3a3a3a" opacity="0.72"/><rect x="6.20" y="179.00" width="0.42" height="1.2" fill="#3a3a3a" opacity="0.72"/><rect x="6.20" y="183.22" width="6.30" height="1.2" fill="#218787" opacity="0.9"/><rect x="12.92" y="183.22" width="0.42" height="1.2" fill="#3a3a3a" opacity="0.72"/><rect x="6.20" y="185.32" width="10.92" height="1.2" fill="#1c71d8" opacity="0.9"/><rect x="17.54" y="185.32" width="0.42" height="1.2" fill="#3a3a3a" opacity="0.72"/><rect x="17.96" y="185.32" width="3.78" height="1.2" fill="#218787" opacity="0.9"/><rect x="23.42" y="185.32" width="0.42" height="1.2" fill="#3a3a3a" opacity="0.72"/><rect x="23.84" y="185.32" width="2.52" height="1.2" fill="#3a3a3a" opacity="0.72"/><rect x="26.36" y="185.32" width="0.42" height="1.2" fill="#3a3a3a" opacity="0.72"/><rect x="17.96" y="187.43" width="5.04" height="1.2" fill="#218787" opacity="0.9"/><rect x="23.42" y="187.43" width="0.42" height="1.2" fill="#3a3a3a" opacity="0.72"/><rect x="23.84" y="187.43" width="1.68" height="1.2" fill="#3a3a3a" opacity="0.72"/><rect x="25.52" y="187.43" width="0.42" height="1.2" fill="#3a3a3a" opacity="0.72"/><rect x="6.20" y="189.53" width="0.42" height="1.2" fill="#3a3a3a" opacity="0.72"/><rect x="7.04" y="193.75" width="3.36" height="1.2" fill="#3a3a3a" opacity="0.72"/><rect x="10.82" y="193.75" width="0.42" height="1.2" fill="#3a3a3a" opacity="0.72"/><rect x="11.24" y="193.75" width="2.52" height="1.2" fill="#3a3a3a" opacity="0.72"/><rect x="14.18" y="193.75" width="0.84" height="1.2" fill="#3a3a3a" opacity="0.72"/><rect x="15.44" y="193.75" width="1.68" height="1.2" fill="#4a4fc4" opacity="0.9"/><rect x="17.12" y="193.75" width="0.84" height="1.2" fill="#3a3a3a" opacity="0.72"/><rect x="7.04" y="195.85" width="3.36" height="1.2" fill="#3a3a3a" opacity="0.72"/><rect x="10.82" y="195.85" width="0.42" height="1.2" fill="#3a3a3a" opacity="0.72"/><rect x="11.24" y="195.85" width="1.68" height="1.2" fill="#3a3a3a" opacity="0.72"/><rect x="13.34" y="195.85" width="0.84" height="1.2" fill="#3a3a3a" opacity="0.72"/><rect x="14.60" y="195.85" width="1.68" height="1.2" fill="#4a4fc4" opacity="0.9"/><rect x="16.28" y="195.85" width="0.84" height="1.2" fill="#3a3a3a" opacity="0.72"/><rect x="7.04" y="200.06" width="0.42" height="1.2" fill="#3a3a3a" opacity="0.72"/><rect x="7.88" y="202.17" width="6.72" height="1.2" fill="#218787" opacity="0.9"/><rect x="15.02" y="202.17" width="0.42" height="1.2" fill="#3a3a3a" opacity="0.72"/><rect x="15.44" y="202.17" width="1.68" height="1.2" fill="#3a3a3a" opacity="0.72"/><rect x="17.54" y="202.17" width="0.42" height="1.2" fill="#3a3a3a" opacity="0.72"/><rect x="18.38" y="202.17" width="1.68" height="1.2" fill="#4a4fc4" opacity="0.9"/><rect x="20.06" y="202.17" width="0.42" height="1.2" fill="#3a3a3a" opacity="0.72"/><rect x="7.88" y="206.38" width="0.84" height="1.2" fill="#9a9a9a" opacity="0.45"/><rect x="9.14" y="206.38" width="2.52" height="1.2" fill="#9a9a9a" opacity="0.45"/><rect x="12.08" y="206.38" width="0.84" height="1.2" fill="#9a9a9a" opacity="0.45"/><rect x="12.92" y="206.38" width="1.68" height="1.2" fill="#9a9a9a" opacity="0.45"/><rect x="13.36" y="206.88" width="0.9" height="1.3" fill="#e01b24" opacity="0.9"/><rect x="14.60" y="206.38" width="0.84" height="1.2" fill="#9a9a9a" opacity="0.45"/><rect x="15.86" y="206.38" width="0.42" height="1.2" fill="#9a9a9a" opacity="0.45"/><rect x="16.70" y="206.38" width="0.84" height="1.2" fill="#9a9a9a" opacity="0.45"/><rect x="7.88" y="208.49" width="0.84" height="1.2" fill="#c64600" opacity="0.9"/><rect x="9.14" y="208.49" width="0.42" height="1.2" fill="#3a3a3a" opacity="0.72"/><rect x="9.56" y="208.49" width="3.78" height="1.2" fill="#1c71d8" opacity="0.9"/><rect x="13.76" y="208.49" width="0.42" height="1.2" fill="#3a3a3a" opacity="0.72"/><rect x="14.18" y="208.49" width="1.68" height="1.2" fill="#3a3a3a" opacity="0.72"/><rect x="15.86" y="208.49" width="0.42" height="1.2" fill="#3a3a3a" opacity="0.72"/><rect x="14.18" y="210.59" width="6.30" height="1.2" fill="#3a3a3a" opacity="0.72"/><rect x="20.90" y="210.59" width="0.42" height="1.2" fill="#3a3a3a" opacity="0.72"/><rect x="21.32" y="210.59" width="7.56" height="1.2" fill="#4a4fc4" opacity="0.9"/><rect x="28.88" y="210.59" width="0.84" height="1.2" fill="#3a3a3a" opacity="0.72"/><rect x="14.18" y="212.70" width="7.56" height="1.2" fill="#3a3a3a" opacity="0.72"/><rect x="22.16" y="212.70" width="0.42" height="1.2" fill="#3a3a3a" opacity="0.72"/><rect x="22.58" y="212.70" width="8.40" height="1.2" fill="#3a3a3a" opacity="0.72"/><rect x="31.40" y="212.70" width="0.42" height="1.2" fill="#3a3a3a" opacity="0.72"/><rect x="31.82" y="212.70" width="2.52" height="1.2" fill="#3a3a3a" opacity="0.72"/><rect x="34.34" y="212.70" width="0.42" height="1.2" fill="#3a3a3a" opacity="0.72"/><rect x="35.18" y="212.70" width="0.42" height="1.2" fill="#3a3a3a" opacity="0.72"/><rect x="35.60" y="212.70" width="1.68" height="1.2" fill="#3a3a3a" opacity="0.72"/><rect x="37.28" y="212.70" width="0.42" height="1.2" fill="#3a3a3a" opacity="0.72"/><rect x="38.12" y="212.70" width="0.42" height="1.2" fill="#4a4fc4" opacity="0.9"/><rect x="38.54" y="212.70" width="1.26" height="1.2" fill="#3a3a3a" opacity="0.72"/><rect x="14.18" y="214.81" width="6.30" height="1.2" fill="#3a3a3a" opacity="0.72"/><rect x="20.90" y="214.81" width="0.42" height="1.2" fill="#3a3a3a" opacity="0.72"/><rect x="21.32" y="214.81" width="7.98" height="1.2" fill="#4a4fc4" opacity="0.9"/><rect x="29.30" y="214.81" width="0.84" height="1.2" fill="#3a3a3a" opacity="0.72"/><rect x="14.18" y="216.91" width="1.68" height="1.2" fill="#4a4fc4" opacity="0.9"/><rect x="15.86" y="216.91" width="0.84" height="1.2" fill="#3a3a3a" opacity="0.72"/><rect x="8.72" y="219.02" width="2.52" height="1.2" fill="#c64600" opacity="0.9"/><rect x="11.66" y="219.02" width="7.14" height="1.2" fill="#3a3a3a" opacity="0.72"/><rect x="19.22" y="219.02" width="0.42" height="1.2" fill="#3a3a3a" opacity="0.72"/><rect x="19.64" y="219.02" width="7.56" height="1.2" fill="#1c71d8" opacity="0.9"/><rect x="27.62" y="219.02" width="0.42" height="1.2" fill="#3a3a3a" opacity="0.72"/><rect x="28.04" y="219.02" width="2.52" height="1.2" fill="#3a3a3a" opacity="0.72"/><rect x="30.56" y="219.02" width="0.84" height="1.2" fill="#3a3a3a" opacity="0.72"/><rect x="31.40" y="219.02" width="3.78" height="1.2" fill="#3a3a3a" opacity="0.72"/><rect x="35.18" y="219.02" width="0.42" height="1.2" fill="#3a3a3a" opacity="0.72"/><rect x="36.02" y="219.02" width="1.68" height="1.2" fill="#3a3a3a" opacity="0.72"/><rect x="37.70" y="219.02" width="1.26" height="1.2" fill="#3a3a3a" opacity="0.72"/><rect x="7.04" y="221.12" width="0.42" height="1.2" fill="#3a3a3a" opacity="0.72"/><rect x="7.04" y="225.34" width="0.42" height="1.2" fill="#3a3a3a" opacity="0.72"/><rect x="7.88" y="227.44" width="6.72" height="1.2" fill="#218787" opacity="0.9"/><rect x="15.02" y="227.44" width="0.42" height="1.2" fill="#3a3a3a" opacity="0.72"/><rect x="15.44" y="227.44" width="1.68" height="1.2" fill="#3a3a3a" opacity="0.72"/><rect x="17.54" y="227.44" width="0.42" height="1.2" fill="#3a3a3a" opacity="0.72"/><rect x="18.38" y="227.44" width="1.68" height="1.2" fill="#4a4fc4" opacity="0.9"/><rect x="20.06" y="227.44" width="0.42" height="1.2" fill="#3a3a3a" opacity="0.72"/><rect x="7.88" y="231.65" width="0.84" height="1.2" fill="#c64600" opacity="0.9"/><rect x="9.14" y="231.65" width="0.42" height="1.2" fill="#3a3a3a" opacity="0.72"/><rect x="9.56" y="231.65" width="3.78" height="1.2" fill="#1c71d8" opacity="0.9"/><rect x="13.76" y="231.65" width="0.42" height="1.2" fill="#3a3a3a" opacity="0.72"/><rect x="14.18" y="231.65" width="1.68" height="1.2" fill="#3a3a3a" opacity="0.72"/><rect x="15.86" y="231.65" width="0.42" height="1.2" fill="#3a3a3a" opacity="0.72"/><rect x="14.18" y="233.76" width="8.40" height="1.2" fill="#3a3a3a" opacity="0.72"/><rect x="23.00" y="233.76" width="0.42" height="1.2" fill="#3a3a3a" opacity="0.72"/><rect x="23.42" y="233.76" width="2.52" height="1.2" fill="#3a3a3a" opacity="0.72"/><rect x="25.94" y="233.76" width="0.42" height="1.2" fill="#3a3a3a" opacity="0.72"/><rect x="26.78" y="233.76" width="0.42" height="1.2" fill="#3a3a3a" opacity="0.72"/><rect x="27.20" y="233.76" width="1.68" height="1.2" fill="#3a3a3a" opacity="0.72"/><rect x="28.88" y="233.76" width="0.42" height="1.2" fill="#3a3a3a" opacity="0.72"/><rect x="29.72" y="233.76" width="0.42" height="1.2" fill="#4a4fc4" opacity="0.9"/><rect x="30.14" y="233.76" width="0.84" height="1.2" fill="#3a3a3a" opacity="0.72"/><rect x="14.18" y="235.87" width="6.30" height="1.2" fill="#3a3a3a" opacity="0.72"/><rect x="20.90" y="235.87" width="0.42" height="1.2" fill="#3a3a3a" opacity="0.72"/><rect x="21.32" y="235.87" width="7.98" height="1.2" fill="#4a4fc4" opacity="0.9"/><rect x="29.30" y="235.87" width="0.84" height="1.2" fill="#3a3a3a" opacity="0.72"/><rect x="14.18" y="237.97" width="1.68" height="1.2" fill="#4a4fc4" opacity="0.9"/><rect x="15.86" y="237.97" width="0.84" height="1.2" fill="#3a3a3a" opacity="0.72"/><rect x="8.72" y="240.08" width="2.52" height="1.2" fill="#c64600" opacity="0.9"/><rect x="11.66" y="240.08" width="7.14" height="1.2" fill="#3a3a3a" opacity="0.72"/><rect x="19.22" y="240.08" width="0.42" height="1.2" fill="#3a3a3a" opacity="0.72"/><rect x="19.64" y="240.08" width="1.68" height="1.2" fill="#3a3a3a" opacity="0.72"/><rect x="21.32" y="240.08" width="0.84" height="1.2" fill="#3a3a3a" opacity="0.72"/><rect x="7.04" y="242.18" width="0.42" height="1.2" fill="#3a3a3a" opacity="0.72"/><rect x="7.04" y="246.40" width="0.42" height="1.2" fill="#3a3a3a" opacity="0.72"/><rect x="7.88" y="248.50" width="6.72" height="1.2" fill="#218787" opacity="0.9"/><rect x="15.02" y="248.50" width="0.42" height="1.2" fill="#3a3a3a" opacity="0.72"/><rect x="15.44" y="248.50" width="3.78" height="1.2" fill="#3a3a3a" opacity="0.72"/><rect x="19.64" y="248.50" width="0.42" height="1.2" fill="#3a3a3a" opacity="0.72"/><rect x="20.48" y="248.50" width="1.68" height="1.2" fill="#4a4fc4" opacity="0.9"/><rect x="22.16" y="248.50" width="0.42" height="1.2" fill="#3a3a3a" opacity="0.72"/><rect x="7.88" y="250.61" width="6.30" height="1.2" fill="#218787" opacity="0.9"/><rect x="14.60" y="250.61" width="0.42" height="1.2" fill="#3a3a3a" opacity="0.72"/><rect x="15.02" y="250.61" width="5.04" height="1.2" fill="#3a3a3a" opacity="0.72"/><rect x="20.48" y="250.61" width="0.42" height="1.2" fill="#3a3a3a" opacity="0.72"/><rect x="21.32" y="250.61" width="1.68" height="1.2" fill="#4a4fc4" opacity="0.9"/><rect x="23.00" y="250.61" width="0.42" height="1.2" fill="#3a3a3a" opacity="0.72"/><rect x="7.88" y="252.71" width="6.30" height="1.2" fill="#218787" opacity="0.9"/><rect x="14.60" y="252.71" width="0.42" height="1.2" fill="#3a3a3a" opacity="0.72"/><rect x="15.02" y="252.71" width="5.88" height="1.2" fill="#3a3a3a" opacity="0.72"/><rect x="21.32" y="252.71" width="0.42" height="1.2" fill="#3a3a3a" opacity="0.72"/><rect x="22.16" y="252.71" width="1.68" height="1.2" fill="#4a4fc4" opacity="0.9"/><rect x="23.84" y="252.71" width="0.42" height="1.2" fill="#3a3a3a" opacity="0.72"/><rect x="7.88" y="256.93" width="0.84" height="1.2" fill="#9a9a9a" opacity="0.45"/><rect x="9.14" y="256.93" width="0.84" height="1.2" fill="#9a9a9a" opacity="0.45"/><rect x="10.40" y="256.93" width="0.42" height="1.2" fill="#9a9a9a" opacity="0.45"/><rect x="11.24" y="256.93" width="0.42" height="1.2" fill="#9a9a9a" opacity="0.45"/><rect x="11.66" y="256.93" width="1.68" height="1.2" fill="#9a9a9a" opacity="0.45"/><rect x="12.10" y="257.43" width="0.9" height="1.3" fill="#e01b24" opacity="0.9"/><rect x="13.34" y="256.93" width="0.42" height="1.2" fill="#9a9a9a" opacity="0.45"/><rect x="14.18" y="256.93" width="0.42" height="1.2" fill="#9a9a9a" opacity="0.45"/><rect x="15.02" y="256.93" width="0.42" height="1.2" fill="#9a9a9a" opacity="0.45"/><rect x="15.44" y="256.93" width="1.68" height="1.2" fill="#9a9a9a" opacity="0.45"/><rect x="15.88" y="257.43" width="0.9" height="1.3" fill="#e01b24" opacity="0.9"/><rect x="17.12" y="256.93" width="0.42" height="1.2" fill="#9a9a9a" opacity="0.45"/><rect x="17.96" y="256.93" width="2.10" height="1.2" fill="#9a9a9a" opacity="0.45"/><rect x="20.48" y="256.93" width="0.42" height="1.2" fill="#9a9a9a" opacity="0.45"/><rect x="20.90" y="256.93" width="1.68" height="1.2" fill="#9a9a9a" opacity="0.45"/><rect x="21.34" y="257.43" width="0.9" height="1.3" fill="#e01b24" opacity="0.9"/><rect x="22.58" y="256.93" width="0.84" height="1.2" fill="#9a9a9a" opacity="0.45"/><rect x="23.84" y="256.93" width="0.84" height="1.2" fill="#9a9a9a" opacity="0.45"/><rect x="7.88" y="259.03" width="0.84" height="1.2" fill="#c64600" opacity="0.9"/><rect x="9.14" y="259.03" width="0.42" height="1.2" fill="#3a3a3a" opacity="0.72"/><rect x="9.56" y="259.03" width="3.78" height="1.2" fill="#1c71d8" opacity="0.9"/><rect x="13.76" y="259.03" width="0.42" height="1.2" fill="#3a3a3a" opacity="0.72"/><rect x="14.18" y="259.03" width="1.68" height="1.2" fill="#3a3a3a" opacity="0.72"/><rect x="15.86" y="259.03" width="0.42" height="1.2" fill="#3a3a3a" opacity="0.72"/><rect x="14.18" y="261.14" width="6.30" height="1.2" fill="#3a3a3a" opacity="0.72"/><rect x="20.90" y="261.14" width="0.42" height="1.2" fill="#3a3a3a" opacity="0.72"/><rect x="21.32" y="261.14" width="5.88" height="1.2" fill="#4a4fc4" opacity="0.9"/><rect x="27.20" y="261.14" width="0.84" height="1.2" fill="#3a3a3a" opacity="0.72"/><rect x="14.18" y="263.24" width="6.30" height="1.2" fill="#3a3a3a" opacity="0.72"/><rect x="20.90" y="263.24" width="0.42" height="1.2" fill="#3a3a3a" opacity="0.72"/><rect x="21.32" y="263.24" width="6.72" height="1.2" fill="#4a4fc4" opacity="0.9"/><rect x="28.04" y="263.24" width="0.84" height="1.2" fill="#3a3a3a" opacity="0.72"/><rect x="14.18" y="265.35" width="8.40" height="1.2" fill="#3a3a3a" opacity="0.72"/><rect x="23.00" y="265.35" width="0.42" height="1.2" fill="#3a3a3a" opacity="0.72"/><rect x="23.42" y="265.35" width="2.52" height="1.2" fill="#3a3a3a" opacity="0.72"/><rect x="25.94" y="265.35" width="0.42" height="1.2" fill="#3a3a3a" opacity="0.72"/><rect x="26.78" y="265.35" width="0.42" height="1.2" fill="#3a3a3a" opacity="0.72"/><rect x="27.20" y="265.35" width="3.78" height="1.2" fill="#3a3a3a" opacity="0.72"/><rect x="30.98" y="265.35" width="0.42" height="1.2" fill="#3a3a3a" opacity="0.72"/><rect x="31.82" y="265.35" width="0.42" height="1.2" fill="#4a4fc4" opacity="0.9"/><rect x="32.24" y="265.35" width="0.84" height="1.2" fill="#3a3a3a" opacity="0.72"/><rect x="14.18" y="267.46" width="6.30" height="1.2" fill="#3a3a3a" opacity="0.72"/><rect x="20.90" y="267.46" width="0.42" height="1.2" fill="#3a3a3a" opacity="0.72"/><rect x="21.32" y="267.46" width="6.72" height="1.2" fill="#4a4fc4" opacity="0.9"/><rect x="28.04" y="267.46" width="0.84" height="1.2" fill="#3a3a3a" opacity="0.72"/><rect x="14.18" y="269.56" width="7.98" height="1.2" fill="#3a3a3a" opacity="0.72"/><rect x="22.58" y="269.56" width="0.42" height="1.2" fill="#3a3a3a" opacity="0.72"/><rect x="23.00" y="269.56" width="2.52" height="1.2" fill="#3a3a3a" opacity="0.72"/><rect x="25.52" y="269.56" width="0.42" height="1.2" fill="#3a3a3a" opacity="0.72"/><rect x="26.36" y="269.56" width="0.42" height="1.2" fill="#3a3a3a" opacity="0.72"/><rect x="26.78" y="269.56" width="5.04" height="1.2" fill="#3a3a3a" opacity="0.72"/><rect x="31.82" y="269.56" width="0.84" height="1.2" fill="#3a3a3a" opacity="0.72"/><rect x="14.18" y="271.67" width="7.56" height="1.2" fill="#3a3a3a" opacity="0.72"/><rect x="22.16" y="271.67" width="0.42" height="1.2" fill="#3a3a3a" opacity="0.72"/><rect x="15.02" y="273.77" width="5.46" height="1.2" fill="#3a3a3a" opacity="0.72"/><rect x="20.90" y="273.77" width="0.42" height="1.2" fill="#3a3a3a" opacity="0.72"/><rect x="15.86" y="275.88" width="6.30" height="1.2" fill="#3a3a3a" opacity="0.72"/><rect x="22.58" y="275.88" width="0.42" height="1.2" fill="#3a3a3a" opacity="0.72"/><rect x="23.00" y="275.88" width="6.72" height="1.2" fill="#4a4fc4" opacity="0.9"/><rect x="29.72" y="275.88" width="0.84" height="1.2" fill="#3a3a3a" opacity="0.72"/><rect x="15.86" y="277.99" width="7.98" height="1.2" fill="#3a3a3a" opacity="0.72"/><rect x="24.26" y="277.99" width="0.42" height="1.2" fill="#3a3a3a" opacity="0.72"/><rect x="24.68" y="277.99" width="2.52" height="1.2" fill="#3a3a3a" opacity="0.72"/><rect x="27.20" y="277.99" width="0.42" height="1.2" fill="#3a3a3a" opacity="0.72"/><rect x="28.04" y="277.99" width="0.42" height="1.2" fill="#3a3a3a" opacity="0.72"/><rect x="28.46" y="277.99" width="5.88" height="1.2" fill="#3a3a3a" opacity="0.72"/><rect x="34.34" y="277.99" width="0.84" height="1.2" fill="#3a3a3a" opacity="0.72"/><rect x="15.02" y="280.09" width="0.42" height="1.2" fill="#3a3a3a" opacity="0.72"/><rect x="14.18" y="282.20" width="0.84" height="1.2" fill="#3a3a3a" opacity="0.72"/><rect x="14.18" y="284.30" width="1.68" height="1.2" fill="#4a4fc4" opacity="0.9"/><rect x="15.86" y="284.30" width="0.84" height="1.2" fill="#3a3a3a" opacity="0.72"/><rect x="8.72" y="286.41" width="2.52" height="1.2" fill="#c64600" opacity="0.9"/><rect x="11.66" y="286.41" width="7.14" height="1.2" fill="#3a3a3a" opacity="0.72"/><rect x="19.22" y="286.41" width="0.42" height="1.2" fill="#3a3a3a" opacity="0.72"/><rect x="19.64" y="286.41" width="5.88" height="1.2" fill="#1c71d8" opacity="0.9"/><rect x="25.94" y="286.41" width="0.42" height="1.2" fill="#3a3a3a" opacity="0.72"/><rect x="26.36" y="286.41" width="2.52" height="1.2" fill="#3a3a3a" opacity="0.72"/><rect x="28.88" y="286.41" width="0.84" height="1.2" fill="#3a3a3a" opacity="0.72"/><rect x="29.72" y="286.41" width="3.78" height="1.2" fill="#3a3a3a" opacity="0.72"/><rect x="33.50" y="286.41" width="0.42" height="1.2" fill="#3a3a3a" opacity="0.72"/><rect x="34.34" y="286.41" width="3.78" height="1.2" fill="#3a3a3a" opacity="0.72"/><rect x="38.12" y="286.41" width="0.42" height="1.2" fill="#3a3a3a" opacity="0.72"/><rect x="38.96" y="286.41" width="5.04" height="1.2" fill="#3a3a3a" opacity="0.72"/><rect x="44.00" y="286.41" width="0.42" height="1.2" fill="#3a3a3a" opacity="0.72"/><rect x="44.84" y="286.41" width="5.88" height="1.2" fill="#3a3a3a" opacity="0.72"/><rect x="50.72" y="286.41" width="1.26" height="1.2" fill="#3a3a3a" opacity="0.72"/><rect x="7.04" y="288.52" width="0.42" height="1.2" fill="#3a3a3a" opacity="0.72"/><rect x="7.04" y="292.73" width="0.42" height="1.2" fill="#3a3a3a" opacity="0.72"/><rect x="7.88" y="294.83" width="4.62" height="1.2" fill="#218787" opacity="0.9"/><rect x="12.92" y="294.83" width="0.42" height="1.2" fill="#3a3a3a" opacity="0.72"/><rect x="13.34" y="294.83" width="2.10" height="1.2" fill="#3a3a3a" opacity="0.72"/><rect x="15.44" y="294.83" width="0.42" height="1.2" fill="#3a3a3a" opacity="0.72"/><rect x="7.88" y="299.05" width="0.84" height="1.2" fill="#c64600" opacity="0.9"/><rect x="9.14" y="299.05" width="0.84" height="1.2" fill="#3a3a3a" opacity="0.72"/><rect x="9.98" y="299.05" width="2.10" height="1.2" fill="#3a3a3a" opacity="0.72"/><rect x="12.50" y="299.05" width="0.42" height="1.2" fill="#3a3a3a" opacity="0.72"/><rect x="13.34" y="299.05" width="9.24" height="1.2" fill="#1c71d8" opacity="0.9"/><rect x="23.00" y="299.05" width="0.42" height="1.2" fill="#3a3a3a" opacity="0.72"/><rect x="23.42" y="299.05" width="2.52" height="1.2" fill="#3a3a3a" opacity="0.72"/><rect x="25.94" y="299.05" width="0.42" height="1.2" fill="#3a3a3a" opacity="0.72"/><rect x="26.78" y="299.05" width="1.68" height="1.2" fill="#3a3a3a" opacity="0.72"/><rect x="28.46" y="299.05" width="1.26" height="1.2" fill="#3a3a3a" opacity="0.72"/><rect x="8.72" y="301.15" width="2.52" height="1.2" fill="#c64600" opacity="0.9"/><rect x="11.66" y="301.15" width="7.14" height="1.2" fill="#3a3a3a" opacity="0.72"/><rect x="19.22" y="301.15" width="0.42" height="1.2" fill="#3a3a3a" opacity="0.72"/><rect x="19.64" y="301.15" width="2.10" height="1.2" fill="#3a3a3a" opacity="0.72"/><rect x="21.74" y="301.15" width="0.84" height="1.2" fill="#3a3a3a" opacity="0.72"/><rect x="7.04" y="303.26" width="0.42" height="1.2" fill="#3a3a3a" opacity="0.72"/><rect x="7.04" y="307.47" width="0.42" height="1.2" fill="#3a3a3a" opacity="0.72"/><rect x="7.88" y="309.58" width="0.84" height="1.2" fill="#9a9a9a" opacity="0.45"/><rect x="9.14" y="309.58" width="2.10" height="1.2" fill="#9a9a9a" opacity="0.45"/><rect x="11.66" y="309.58" width="0.42" height="1.2" fill="#9a9a9a" opacity="0.45"/><rect x="12.50" y="309.58" width="0.84" height="1.2" fill="#9a9a9a" opacity="0.45"/><rect x="7.88" y="311.68" width="0.84" height="1.2" fill="#c64600" opacity="0.9"/><rect x="9.14" y="311.68" width="0.42" height="1.2" fill="#3a3a3a" opacity="0.72"/><rect x="9.56" y="311.68" width="3.78" height="1.2" fill="#1c71d8" opacity="0.9"/><rect x="13.76" y="311.68" width="0.42" height="1.2" fill="#3a3a3a" opacity="0.72"/><rect x="14.18" y="311.68" width="1.68" height="1.2" fill="#3a3a3a" opacity="0.72"/><rect x="15.86" y="311.68" width="0.42" height="1.2" fill="#3a3a3a" opacity="0.72"/><rect x="14.18" y="313.79" width="6.30" height="1.2" fill="#3a3a3a" opacity="0.72"/><rect x="20.90" y="313.79" width="0.42" height="1.2" fill="#3a3a3a" opacity="0.72"/><rect x="21.32" y="313.79" width="7.14" height="1.2" fill="#4a4fc4" opacity="0.9"/><rect x="28.46" y="313.79" width="0.84" height="1.2" fill="#3a3a3a" opacity="0.72"/><rect x="14.18" y="315.89" width="6.30" height="1.2" fill="#3a3a3a" opacity="0.72"/><rect x="20.90" y="315.89" width="0.42" height="1.2" fill="#3a3a3a" opacity="0.72"/><rect x="21.32" y="315.89" width="7.98" height="1.2" fill="#4a4fc4" opacity="0.9"/><rect x="29.30" y="315.89" width="0.84" height="1.2" fill="#3a3a3a" opacity="0.72"/><rect x="14.18" y="318.00" width="1.68" height="1.2" fill="#4a4fc4" opacity="0.9"/><rect x="15.86" y="318.00" width="0.84" height="1.2" fill="#3a3a3a" opacity="0.72"/><rect x="8.72" y="320.11" width="2.52" height="1.2" fill="#c64600" opacity="0.9"/><rect x="11.66" y="320.11" width="7.14" height="1.2" fill="#3a3a3a" opacity="0.72"/><rect x="19.22" y="320.11" width="0.42" height="1.2" fill="#3a3a3a" opacity="0.72"/><rect x="19.64" y="320.11" width="7.14" height="1.2" fill="#1c71d8" opacity="0.9"/><rect x="27.20" y="320.11" width="0.42" height="1.2" fill="#3a3a3a" opacity="0.72"/><rect x="27.62" y="320.11" width="2.52" height="1.2" fill="#3a3a3a" opacity="0.72"/><rect x="30.14" y="320.11" width="0.84" height="1.2" fill="#3a3a3a" opacity="0.72"/><rect x="30.98" y="320.11" width="3.78" height="1.2" fill="#3a3a3a" opacity="0.72"/><rect x="34.76" y="320.11" width="1.26" height="1.2" fill="#3a3a3a" opacity="0.72"/><rect x="7.04" y="322.21" width="0.42" height="1.2" fill="#3a3a3a" opacity="0.72"/><rect x="7.04" y="326.42" width="0.42" height="1.2" fill="#3a3a3a" opacity="0.72"/><rect x="7.88" y="328.53" width="0.84" height="1.2" fill="#9a9a9a" opacity="0.45"/><rect x="9.14" y="328.53" width="3.36" height="1.2" fill="#9a9a9a" opacity="0.45"/><rect x="12.92" y="328.53" width="0.42" height="1.2" fill="#9a9a9a" opacity="0.45"/><rect x="13.76" y="328.53" width="0.84" height="1.2" fill="#9a9a9a" opacity="0.45"/><rect x="7.88" y="330.64" width="0.84" height="1.2" fill="#c64600" opacity="0.9"/><rect x="9.14" y="330.64" width="0.42" height="1.2" fill="#3a3a3a" opacity="0.72"/><rect x="9.56" y="330.64" width="3.78" height="1.2" fill="#1c71d8" opacity="0.9"/><rect x="13.76" y="330.64" width="0.42" height="1.2" fill="#3a3a3a" opacity="0.72"/><rect x="14.18" y="330.64" width="1.68" height="1.2" fill="#3a3a3a" opacity="0.72"/><rect x="15.86" y="330.64" width="0.42" height="1.2" fill="#3a3a3a" opacity="0.72"/><rect x="14.18" y="332.74" width="6.30" height="1.2" fill="#3a3a3a" opacity="0.72"/><rect x="20.90" y="332.74" width="0.42" height="1.2" fill="#3a3a3a" opacity="0.72"/><rect x="21.32" y="332.74" width="8.40" height="1.2" fill="#4a4fc4" opacity="0.9"/><rect x="29.72" y="332.74" width="0.84" height="1.2" fill="#3a3a3a" opacity="0.72"/><rect x="14.18" y="334.85" width="6.30" height="1.2" fill="#3a3a3a" opacity="0.72"/><rect x="20.90" y="334.85" width="0.42" height="1.2" fill="#3a3a3a" opacity="0.72"/><rect x="21.32" y="334.85" width="7.98" height="1.2" fill="#4a4fc4" opacity="0.9"/><rect x="29.30" y="334.85" width="0.84" height="1.2" fill="#3a3a3a" opacity="0.72"/><rect x="14.18" y="336.95" width="1.68" height="1.2" fill="#4a4fc4" opacity="0.9"/><rect x="15.86" y="336.95" width="0.84" height="1.2" fill="#3a3a3a" opacity="0.72"/><rect x="8.72" y="339.06" width="2.52" height="1.2" fill="#c64600" opacity="0.9"/><rect x="11.66" y="339.06" width="7.14" height="1.2" fill="#3a3a3a" opacity="0.72"/><rect x="19.22" y="339.06" width="0.42" height="1.2" fill="#3a3a3a" opacity="0.72"/><rect x="19.64" y="339.06" width="8.40" height="1.2" fill="#1c71d8" opacity="0.9"/><rect x="28.46" y="339.06" width="0.42" height="1.2" fill="#3a3a3a" opacity="0.72"/><rect x="28.88" y="339.06" width="2.52" height="1.2" fill="#3a3a3a" opacity="0.72"/><rect x="31.40" y="339.06" width="0.84" height="1.2" fill="#3a3a3a" opacity="0.72"/><rect x="32.24" y="339.06" width="3.78" height="1.2" fill="#3a3a3a" opacity="0.72"/><rect x="36.02" y="339.06" width="1.26" height="1.2" fill="#3a3a3a" opacity="0.72"/><rect x="7.04" y="341.17" width="0.42" height="1.2" fill="#3a3a3a" opacity="0.72"/><rect x="7.04" y="345.38" width="0.42" height="1.2" fill="#3a3a3a" opacity="0.72"/><rect x="7.88" y="347.48" width="6.72" height="1.2" fill="#218787" opacity="0.9"/><rect x="15.02" y="347.48" width="0.42" height="1.2" fill="#3a3a3a" opacity="0.72"/><rect x="15.44" y="347.48" width="3.78" height="1.2" fill="#3a3a3a" opacity="0.72"/><rect x="19.64" y="347.48" width="0.42" height="1.2" fill="#3a3a3a" opacity="0.72"/><rect x="20.48" y="347.48" width="1.68" height="1.2" fill="#4a4fc4" opacity="0.9"/><rect x="22.16" y="347.48" width="0.42" height="1.2" fill="#3a3a3a" opacity="0.72"/><rect x="7.88" y="349.59" width="6.30" height="1.2" fill="#218787" opacity="0.9"/><rect x="14.60" y="349.59" width="0.42" height="1.2" fill="#3a3a3a" opacity="0.72"/><rect x="15.02" y="349.59" width="3.78" height="1.2" fill="#3a3a3a" opacity="0.72"/><rect x="19.22" y="349.59" width="0.42" height="1.2" fill="#3a3a3a" opacity="0.72"/><rect x="20.06" y="349.59" width="1.68" height="1.2" fill="#4a4fc4" opacity="0.9"/><rect x="21.74" y="349.59" width="0.42" height="1.2" fill="#3a3a3a" opacity="0.72"/><rect x="7.88" y="353.80" width="0.84" height="1.2" fill="#9a9a9a" opacity="0.45"/><rect x="9.14" y="353.80" width="2.10" height="1.2" fill="#9a9a9a" opacity="0.45"/><rect x="11.66" y="353.80" width="0.42" height="1.2" fill="#9a9a9a" opacity="0.45"/><rect x="12.50" y="353.80" width="0.42" height="1.2" fill="#9a9a9a" opacity="0.45"/><rect x="12.92" y="353.80" width="1.68" height="1.2" fill="#9a9a9a" opacity="0.45"/><rect x="13.36" y="354.30" width="0.9" height="1.3" fill="#e01b24" opacity="0.9"/><rect x="14.60" y="353.80" width="0.42" height="1.2" fill="#9a9a9a" opacity="0.45"/><rect x="15.44" y="353.80" width="0.42" height="1.2" fill="#9a9a9a" opacity="0.45"/><rect x="16.28" y="353.80" width="0.42" height="1.2" fill="#9a9a9a" opacity="0.45"/><rect x="16.70" y="353.80" width="1.68" height="1.2" fill="#9a9a9a" opacity="0.45"/><rect x="17.14" y="354.30" width="0.9" height="1.3" fill="#e01b24" opacity="0.9"/><rect x="18.38" y="353.80" width="0.42" height="1.2" fill="#9a9a9a" opacity="0.45"/><rect x="19.22" y="353.80" width="0.84" height="1.2" fill="#9a9a9a" opacity="0.45"/><rect x="7.88" y="355.91" width="0.84" height="1.2" fill="#c64600" opacity="0.9"/><rect x="9.14" y="355.91" width="0.42" height="1.2" fill="#3a3a3a" opacity="0.72"/><rect x="9.56" y="355.91" width="3.78" height="1.2" fill="#1c71d8" opacity="0.9"/><rect x="13.76" y="355.91" width="0.42" height="1.2" fill="#3a3a3a" opacity="0.72"/><rect x="14.18" y="355.91" width="1.68" height="1.2" fill="#3a3a3a" opacity="0.72"/><rect x="15.86" y="355.91" width="0.42" height="1.2" fill="#3a3a3a" opacity="0.72"/><rect x="14.18" y="358.01" width="6.30" height="1.2" fill="#3a3a3a" opacity="0.72"/><rect x="20.90" y="358.01" width="0.42" height="1.2" fill="#3a3a3a" opacity="0.72"/><rect x="21.32" y="358.01" width="7.14" height="1.2" fill="#4a4fc4" opacity="0.9"/><rect x="28.46" y="358.01" width="0.84" height="1.2" fill="#3a3a3a" opacity="0.72"/><rect x="14.18" y="360.12" width="6.30" height="1.2" fill="#3a3a3a" opacity="0.72"/><rect x="20.90" y="360.12" width="0.42" height="1.2" fill="#3a3a3a" opacity="0.72"/><rect x="21.32" y="360.12" width="6.72" height="1.2" fill="#4a4fc4" opacity="0.9"/><rect x="28.04" y="360.12" width="0.84" height="1.2" fill="#3a3a3a" opacity="0.72"/><rect x="14.18" y="362.23" width="8.40" height="1.2" fill="#3a3a3a" opacity="0.72"/><rect x="23.00" y="362.23" width="0.42" height="1.2" fill="#3a3a3a" opacity="0.72"/><rect x="23.42" y="362.23" width="2.52" height="1.2" fill="#3a3a3a" opacity="0.72"/><rect x="25.94" y="362.23" width="0.42" height="1.2" fill="#3a3a3a" opacity="0.72"/><rect x="26.78" y="362.23" width="0.42" height="1.2" fill="#3a3a3a" opacity="0.72"/><rect x="27.20" y="362.23" width="3.78" height="1.2" fill="#3a3a3a" opacity="0.72"/><rect x="30.98" y="362.23" width="0.42" height="1.2" fill="#3a3a3a" opacity="0.72"/><rect x="31.82" y="362.23" width="0.42" height="1.2" fill="#4a4fc4" opacity="0.9"/><rect x="32.24" y="362.23" width="0.84" height="1.2" fill="#3a3a3a" opacity="0.72"/><rect x="14.18" y="364.33" width="6.30" height="1.2" fill="#3a3a3a" opacity="0.72"/><rect x="20.90" y="364.33" width="0.42" height="1.2" fill="#3a3a3a" opacity="0.72"/><rect x="21.32" y="364.33" width="6.72" height="1.2" fill="#4a4fc4" opacity="0.9"/><rect x="28.04" y="364.33" width="0.84" height="1.2" fill="#3a3a3a" opacity="0.72"/><rect x="14.18" y="366.44" width="7.98" height="1.2" fill="#3a3a3a" opacity="0.72"/><rect x="22.58" y="366.44" width="0.42" height="1.2" fill="#3a3a3a" opacity="0.72"/><rect x="23.00" y="366.44" width="2.52" height="1.2" fill="#3a3a3a" opacity="0.72"/><rect x="25.52" y="366.44" width="0.42" height="1.2" fill="#3a3a3a" opacity="0.72"/><rect x="26.36" y="366.44" width="0.42" height="1.2" fill="#3a3a3a" opacity="0.72"/><rect x="26.78" y="366.44" width="3.78" height="1.2" fill="#3a3a3a" opacity="0.72"/><rect x="30.56" y="366.44" width="0.84" height="1.2" fill="#3a3a3a" opacity="0.72"/></svg></div>

<!-- ===== Status bar ===== -->
<div class="status"></div>
<div class="txt st" style="left:353.8px;letter-spacing:0.44px">main</div>
<div class="vs" style="left:386.2px"></div>
<div class="txt st" style="left:408.4px;color:#666">0</div>
<div class="txt st" style="left:433px;color:#666">0</div>
<div class="vs" style="left:446.8px"></div>
<div class="vs" style="left:1010.4px"></div>
<div class="txt st" style="left:1038.2px;letter-spacing:0.14px">rig_parser_new</div>
<div class="vs" style="left:1122.2px"></div>
<div class="vs" style="left:1152.8px"></div>
<div class="txt st" style="left:1172px;letter-spacing:-0.06px">Ln 68, Col 3</div>
<div class="vs" style="left:1248.4px"></div>
<div class="txt st" style="left:1258px;letter-spacing:-0.28px">Spaces: 2</div>
<div class="vs" style="left:1310.4px"></div>
<div class="txt st" style="left:1319.6px;letter-spacing:0.18px">UTF-8</div>
<div class="vs" style="left:1358px"></div>
<div class="txt st" style="left:1368px;letter-spacing:-0.2px">LF</div>
<div class="vs" style="left:1388.8px"></div>
<div class="txt st" style="left:1396px">C</div>
<div class="vs" style="left:1410.6px"></div>
<svg class="icons" style="left:0;top:0" width="1504" height="942" viewBox="0 0 752 471" fill="none" stroke="#333" stroke-width="0.95" stroke-linecap="round" stroke-linejoin="round">
<!-- sidebar search -->
<circle cx="34.7" cy="32.3" r="2.3" stroke-width="1.05"/><path d="M36.5 34.1 L38.1 35.6" stroke-width="1.25"/>
<!-- hamburger -->
<path d="M151.3 30.4H157.2M151.3 32.75H157.2M151.3 35.1H157.2" stroke-width="0.95" stroke-linecap="butt"/>
<!-- tab1: list -->
<g stroke="none" fill="#2e2e2e"><rect x="37.5" y="48.6" width="1.5" height="1.5"/><rect x="37.5" y="51.2" width="1.5" height="1.5"/><rect x="37.5" y="53.8" width="1.5" height="1.5"/>
<rect x="39.9" y="48.9" width="3.7" height="0.9"/><rect x="39.9" y="51.5" width="3.7" height="0.9"/><rect x="39.9" y="54.1" width="3.7" height="0.9"/></g>
<!-- tab2: build/hammer-ish -->
<g stroke="#333"><path d="M64.6 54.7 L67.6 51.1" stroke-width="1.5"/><path d="M66.1 49.6 C67.6 48.7 69.7 49.4 70.5 51.2" stroke-width="1.5"/><path d="M68.5 52.9 L70.7 54.7" stroke-width="1.3"/><path d="M70.7 52.6 L69.9 53.9" stroke-width="0.9"/></g>
<!-- tab3: circle slash -->
<circle cx="95.2" cy="52.05" r="2.8" stroke-width="1.0"/><path d="M93.3 50.2 L97.1 54" stroke-width="0.8"/><path d="M97 50.3 L93.4 53.9" stroke="#777" stroke-width="0.6"/>
<!-- tab4: checkbox -->
<path d="M124.6 52.4V54Q124.6 54.7 123.9 54.7H120.1Q119.4 54.7 119.4 54V50.2Q119.4 49.5 120.1 49.5H123.2" stroke-width="1.05"/><path d="M121 52 L122.1 53.1 L125 49.6" stroke-width="0.95"/>
<!-- tab5: doc -->
<defs><linearGradient id="dg" x1="0" y1="0" x2="1" y2="1"><stop offset="0" stop-color="#5a5a5a"/><stop offset="1" stop-color="#bdbdbd"/></linearGradient></defs><rect x="146.5" y="49.2" width="5.2" height="5.4" rx="0.8" fill="url(#dg)" stroke="none"/><path d="M148 51.2H150.4" stroke="#d8d8d8" stroke-width="0.6"/>
<!-- filter search -->
<g stroke="#555"><circle cx="32.1" cy="436.2" r="2.2" stroke-width="0.9"/><path d="M33.8 437.9 L35.3 439.4" stroke-width="1.1"/></g>
<!-- sidebar toggle -->
<defs><linearGradient id="tg" x1="0" y1="0" x2="1" y2="0"><stop offset="0" stop-color="#6e6e6e"/><stop offset="1" stop-color="#dcdcdc"/></linearGradient></defs><rect x="173.9" y="30.7" width="3.6" height="4.5" fill="url(#tg)" stroke="none"/><rect x="173.5" y="30.35" width="6.3" height="5.2" rx="1.1" stroke-width="0.95"/>
<!-- plus -->
<path d="M193.4 32.8H199.6M196.5 29.7V35.9" stroke-width="0.95" stroke-linecap="butt"/>
<!-- arrows -->
<g stroke="none" fill="#2e2e2e">
<path d="M202.6 31.4H207.4L205 34Z"/>
<path d="M519.8 31.4H524.6L522.2 34Z"/>
<path d="M548.5 31.4H553.3L550.9 34Z"/>
<path d="M716.3 50.8H721.1L718.7 53.4Z"/>
<path d="M366 31.8L367.8 29.6L369.6 31.8Z"/><path d="M366 33.8L367.8 36L369.6 33.8Z"/>
<path d="M536.9 30.3V35.1L541.3 32.7Z"/>
</g>
<!-- ready check -->
<path d="M396.7 33.3 L398.1 34.6 L401.2 31.2" stroke-width="1.1"/>
<!-- hammer -->
<path d="M505.3 35.4 L509.4 31.2" stroke-width="1.4"/><path d="M507.3 29.9 L511.4 33.6" stroke-width="1.9" stroke-linecap="butt"/>
<!-- separators in header -->
<path d="M515.5 27.8V37.4" stroke="#d2d2d2" stroke-width="0.8"/><path d="M545.9 27.8V37.4" stroke="#e2e2e2" stroke-width="0.8"/>
<!-- window close -->
<path d="M715.5 31.5L718.1 34.1M718.1 31.5L715.5 34.1" stroke-width="0.95"/>
<!-- tab close -->
<path d="M701.55 50.75L704.25 53.45M704.25 50.75L701.55 53.45" stroke-width="0.95"/>
<!-- status: branch -->
<path d="M169.4 434.6V439.6" stroke-width="1"/><circle cx="173" cy="435" r="0.8" fill="#333" stroke="none"/><path d="M173 435.4 C173 437.3 171 437.2 169.6 437.6" stroke-width="0.8"/>
<!-- status: error -->
<circle cx="200.3" cy="437.1" r="2.35" fill="#2e2e2e" stroke="none"/><path d="M199.1 437.1H201.5" stroke="#999" stroke-width="0.8"/>
<!-- status: warn -->
<path d="M212.45 434.5L214.9 439.1H210Z" fill="#2e2e2e" stroke="#2e2e2e" stroke-width="0.5"/><path d="M212.45 435.8V437.6" stroke="#ddd" stroke-width="0.6"/>
<!-- status: symbol f() -->
<g stroke="#444" stroke-width="0.7"><path d="M512.6 434.8C511.6 434.6 511.5 435.3 511.4 436.2L511 438.8C510.9 439.6 510.6 439.8 510.1 439.6M510.6 436.6H512.3"/><path d="M514 434.7C513.3 436 513.3 438.2 514 439.6M515.3 434.7C516 436 516 438.2 515.3 439.6"/></g>
<!-- status: folder -->
<path d="M565.9 435.2V438.6Q565.9 439.3 566.6 439.3H571.2Q571.9 439.3 571.9 438.6V436.1Q571.9 435.4 571.2 435.4H569.2L568.3 434.4H566.6Q565.9 434.4 565.9 435.2Z" stroke-width="0.9"/>
<!-- status: panel -->
<rect x="713.4" y="434.4" width="5.8" height="4.9" rx="0.9" stroke-width="0.95"/><rect x="713.9" y="437.1" width="4.8" height="1.8" fill="#8c8c8c" stroke="none"/>
</svg>


</div></div></div>
</body></html>
